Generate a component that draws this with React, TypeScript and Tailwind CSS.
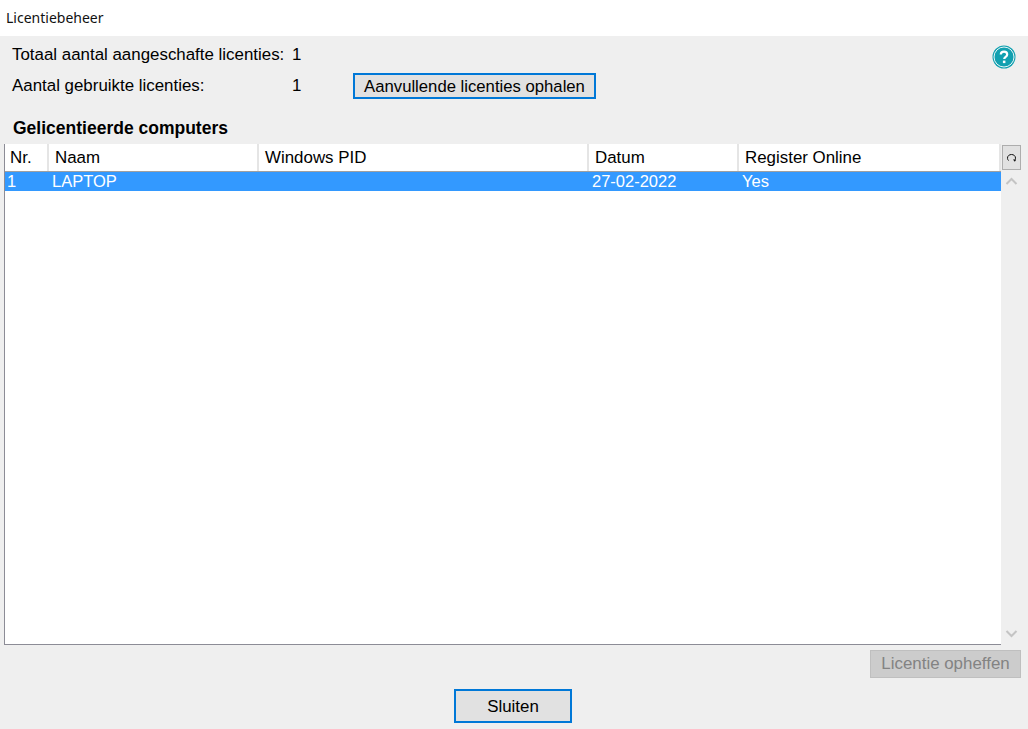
const columns = [
  { label: 'Nr.', width: 'w-[44px]', value: '1' },
  { label: 'Naam', width: 'w-[210px]', value: 'LAPTOP' },
  { label: 'Windows PID', width: 'w-[330px]', value: '' },
  { label: 'Datum', width: 'w-[150px]', value: '27-02-2022' },
  { label: 'Register Online', width: 'flex-1', value: 'Yes' },
];

const HelpIcon = () => (
  <svg width="24" height="24" viewBox="0 0 24 24" className="block">
    <circle cx="12" cy="12" r="11.5" fill="#12a0b0" />
    <circle cx="12" cy="12" r="10" fill="none" stroke="#e8f6f7" strokeWidth="1" />
    <path d="M8.8 9.6c0-2 1.4-3 3.2-3s3.2 1 3.2 2.8c0 2.4-3 2.4-3 4.6" fill="none" stroke="#fff" strokeWidth="2.2" />
    <rect x="10.9" y="15.6" width="2.5" height="2.5" fill="#fff" />
  </svg>
);

const App = () => {
  return (
    <div className="flex h-[729px] w-[1028px] flex-col overflow-hidden bg-[#efefef] font-['Liberation_Sans',sans-serif] text-[16.9px] text-black">
      <div className="flex h-9 items-center bg-white pl-[6px] pb-[1px] font-['Noto_Sans',sans-serif] text-[14px] text-[#111]">
        Licentiebeheer
      </div>

      <div className="flex items-start justify-between pl-3 pr-3 pt-[9px]">
        <div>
          <div className="flex h-5 items-center">
            <span className="w-[280px]">Totaal aantal aangeschafte licenties:</span>
            <span>1</span>
          </div>
          <div className="mt-[8px] flex h-[26px] items-center">
            <span className="w-[280px]">Aantal gebruikte licenties:</span>
            <span className="w-[61px]">1</span>
            <button className="h-[26px] w-[243px] border-2 border-[#0078d7] bg-[#e1e1e1] pt-[1px] text-center text-[16.7px] leading-[20px]">
              Aanvullende licenties ophalen
            </button>
          </div>
        </div>
        <HelpIcon />
      </div>

      <div className="mt-[18px] h-[20px] pl-[13px] pt-[1px] text-[17.5px] leading-[20px] font-bold">Gelicentieerde computers</div>

      <div className="mt-[7px] flex pl-1 pr-[7px]">
        <div className="h-[501px] w-[997px] border-b border-l border-[#8c8c96] bg-white">
          <div className="flex h-[28px] border-b border-[#a0a0a0]">
            {columns.map((col) => (
              <div key={col.label} className={`${col.width} flex items-center border-r-2 border-[#e5e5e5] pl-[6px] first:pl-[5px]`}>
                {col.label}
              </div>
            ))}
          </div>
          <div className="flex h-[19px] bg-[#3399ff] text-[16.5px] text-white">
            {columns.map((col) => (
              <div key={col.label} className={`${col.width} flex items-center pl-[3px] first:pl-[2px]`}>
                {col.value}
              </div>
            ))}
          </div>
        </div>

        <div className="flex w-[20px] flex-col items-center">
          <div className="ml-[1px] mt-[1px] flex h-[25px] w-[19px] shrink-0 items-center justify-center border border-[#adadad] bg-[#e1e1e1]">
            <svg width="9" height="10" viewBox="0 0 9 10" fill="none" stroke="#111" strokeWidth="1">
              <path d="M1.6 7.5C.6 6.8.5 5.8.5 5 .5 2.9 2.3 1.5 4.5 1.5S8.5 2.9 8.5 5c0 .6-.1 1.1-.4 1.6" />
              <path d="M6 6.4h3.4L7.8 8.8z" fill="#111" stroke="none" />
            </svg>
          </div>
          <svg width="13" height="9" viewBox="0 0 13 9" fill="none" stroke="#c4c4c4" strokeWidth="2" className="mt-[7px] ml-[1px]">
            <path d="M1.5 7 6.5 2l5 5" />
          </svg>
          <svg width="13" height="9" viewBox="0 0 13 9" fill="none" stroke="#c4c4c4" strokeWidth="2" className="mt-auto mb-[7px] ml-[1px]">
            <path d="M1.5 2l5 5 5-5" />
          </svg>
        </div>
      </div>

      <div className="mt-[5px] flex justify-end pr-[7px]">
        <button className="h-[28px] w-[151px] border border-[#bfbfbf] bg-[#cccccc] text-center text-[#838383]">
          Licentie opheffen
        </button>
      </div>

      <div className="mt-[11px] flex justify-center pr-[2px]">
        <button className="h-[34px] w-[118px] border-2 border-[#0078d7] bg-[#e1e1e1] pt-[1px] text-center">Sluiten</button>
      </div>
    </div>
  );
};

export default App;
